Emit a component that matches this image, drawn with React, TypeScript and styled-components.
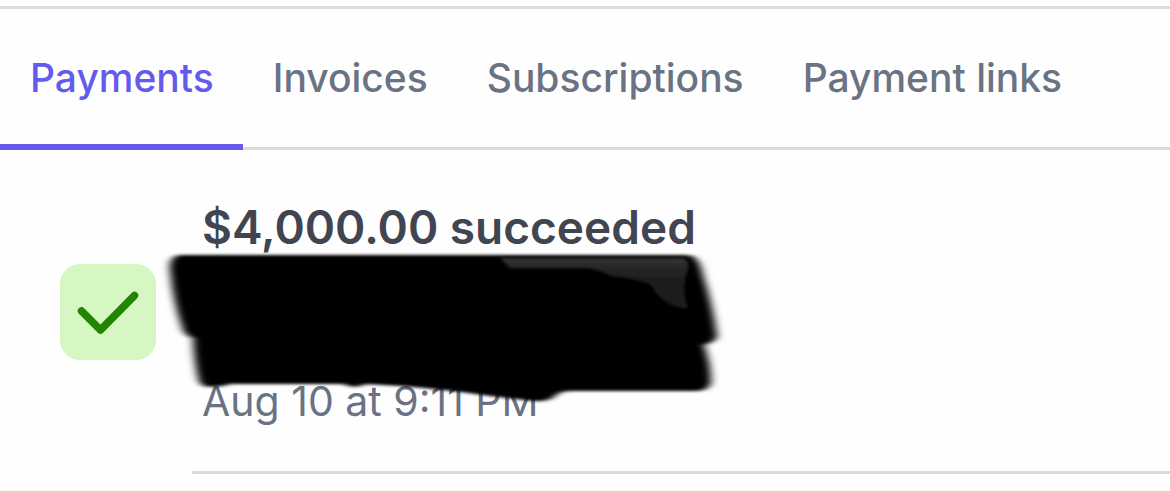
import React from "react";
import styled, { createGlobalStyle } from "styled-components";

const GlobalStyle = createGlobalStyle`
  *, *::before, *::after { box-sizing: border-box; }
  body {
    margin: 0;
    background: #fefefe;
    font-family: Inter, "Liberation Sans", sans-serif;
  }
`;

const Page = styled.main`
  padding-top: 6px;
  overflow-x: clip;
`;

const TabBar = styled.nav`
  display: flex;
  height: 144px;
  border-top: 3px solid #d9dbdd;
  box-shadow: inset 0 -3px #d9dbdf;
`;

const Tab = styled.a<{ $active?: boolean }>`
  display: flex;
  align-items: center;
  padding: 2px 29px 0 30px;
  border-bottom: 6px solid ${(p) => (p.$active ? "#635bed" : "transparent")};
  color: ${(p) => (p.$active ? "#635bed" : "#6a7383")};
  font-size: 39px;
  font-weight: 500;
  line-height: 48px;
  text-decoration: none;
  white-space: nowrap;
`;

const PaymentList = styled.ul`
  margin: 0;
  padding: 0;
  list-style: none;
`;

const PaymentItem = styled.li`
  display: flex;
  align-items: center;
  gap: 36px;
  padding-left: 60px;
`;

const StatusBadge = styled.span`
  display: flex;
  flex: none;
  width: 96px;
  height: 96px;
  border-radius: 20px;
  background: #d7f7c2;
`;

const Details = styled.div`
  flex: 1;
  padding: 45px 10px 44px;
  border-bottom: 3px solid #d8d9e2;
`;

const Amount = styled.h2`
  margin: 0;
  color: #414552;
  font-size: 46px;
  font-weight: 600;
  line-height: 64px;
  white-space: nowrap;
`;

const Redacted = styled.div`
  position: relative;
  height: 116px;
`;

const Scribble = styled.svg`
  position: absolute;
  top: -19px;
  left: -42px;
  width: 570px;
  height: 170px;
  pointer-events: none;
`;

const PaidAt = styled.time`
  display: block;
  color: #6a7383;
  font-size: 41px;
  font-weight: 400;
  line-height: 52px;
  white-space: nowrap;
`;

const tabs = ["Payments", "Invoices", "Subscriptions", "Payment links"];

function CheckIcon() {
  return (
    <svg width="96" height="96" viewBox="0 0 96 96" role="img" aria-label="Succeeded">
      <path
        d="M21.5 47 40.5 66 74.500 31.500"
        fill="none"
        stroke="#228403"
        strokeWidth="7.500"
        strokeLinecap="round"
        strokeLinejoin="round"
      />
    </svg>
  );
}

function MarkerScribble() {
  return (
    <Scribble viewBox="160 240 570 170" aria-hidden="true">
      <defs>
        <filter id="soft" x="-5%" y="-10%" width="110%" height="120%">
          <feGaussianBlur stdDeviation="4 1.800" />
        </filter>
        <filter id="sheenSoft" x="-5%" y="-10%" width="110%" height="120%">
          <feGaussianBlur stdDeviation="1.800" />
        </filter>
        <linearGradient id="sheen" x1="0" y1="0" x2="0" y2="1">
          <stop offset="0" stopColor="#343434" />
          <stop offset="0.300" stopColor="#202020" />
          <stop offset="1" stopColor="#1a1a1a" />
        </linearGradient>
      </defs>
      <path
        filter="url(#soft)"
        d="M178 255 Q169 258 170 270 Q173 302 183 330 Q186 336 193 338 Q194 362 199 381 Q202 387 210 387 L224 386 Q229 383 238 384 L344 384 Q349 387 356 387 Q362 386 365 384 L401 386 Q450 390 490 396 L533 401 Q548 402 554 397 Q559 391 570 391 L699 391 Q709 390 711 382 Q711 364 704 345 Q717 342 717 335 Q712 302 703 275 Q699 255 687 255 Z"
      />
      <path
        filter="url(#sheenSoft)"
        fill="url(#sheen)"
        d="M500 258 H684 Q691 262 687 272 Q681 290 688 308 Q678 309 670 304 Q659 299 650 284 Q632 278 611 276 Q595 267 580 268 H510 Z"
      />
    </Scribble>
  );
}

export default function App() {
  return (
    <>
      <GlobalStyle />
      <Page>
        <TabBar aria-label="Activity">
          {tabs.map((label, i) => (
            <Tab key={label} href="#" $active={i === 0} aria-current={i === 0 ? "page" : undefined}>
              {label}
            </Tab>
          ))}
        </TabBar>
        <PaymentList>
          <PaymentItem>
            <StatusBadge>
              <CheckIcon />
            </StatusBadge>
            <Details>
              <Amount>$4,000.00 succeeded</Amount>
              <Redacted>
                <MarkerScribble />
              </Redacted>
              <PaidAt>Aug 10 at 9:11 PM</PaidAt>
            </Details>
          </PaymentItem>
        </PaymentList>
      </Page>
    </>
  );
}
